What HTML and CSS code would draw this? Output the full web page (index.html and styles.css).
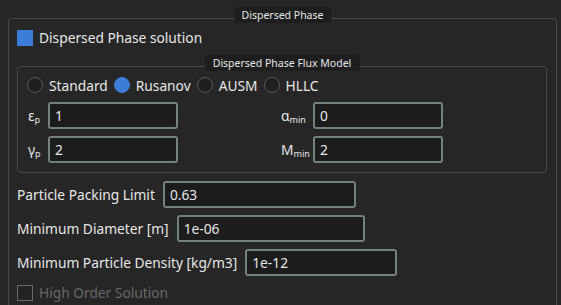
FILE: index.html
```html
<!DOCTYPE html>
<html lang="en">
<head>
  <meta charset="UTF-8" />
  <title>Dispersed Phase</title>
  <link rel="stylesheet" href="styles.css">
</head>
<body>

<section class="group outer">
  <div class="group-title">Dispersed Phase</div>

  <label class="check">
    <span class="box checked"></span>
    Dispersed Phase solution
  </label>

  <section class="group inner">
    <div class="group-title">Dispersed Phase Flux Model</div>

    <div class="radios">
      <label class="radio"><span class="dot"></span>Standard</label>
      <label class="radio"><span class="dot on"></span>Rusanov</label>
      <label class="radio"><span class="dot"></span>AUSM</label>
      <label class="radio"><span class="dot"></span>HLLC</label>
    </div>

    <div class="params">
      <div class="param">
        <span class="sym sym-short">ε<sub>p</sub></span>
        <div class="input">1</div>
      </div>
      <div class="param">
        <span class="sym sym-long">α<sub>min</sub></span>
        <div class="input">0</div>
      </div>
      <div class="param">
        <span class="sym sym-short">γ<sub>p</sub></span>
        <div class="input">2</div>
      </div>
      <div class="param">
        <span class="sym sym-long">M<sub>min</sub></span>
        <div class="input">2</div>
      </div>
    </div>
  </section>

  <div class="row">
    <span>Particle Packing Limit</span>
    <div class="input packing">0.63</div>
  </div>
  <div class="row">
    <span>Minimum Diameter [m]</span>
    <div class="input diameter">1e-06</div>
  </div>
  <div class="row">
    <span>Minimum Particle Density [kg/m3]</span>
    <div class="input density">1e-12</div>
  </div>

  <label class="check disabled">
    <span class="box"></span>
    High Order Solution
  </label>
</section>

</body>
</html>
```

FILE: styles.css
```css
:root {
  --bg: #262626;
  --title-bg: #1e1e1e;
  --line: #484848;
  --text: #e6e6e6;
  --muted: #686868;
  --accent: #3b7dd8;
  --field-bg: #1c1c1c;
  --field-border: #74817f;
}

* {
  margin: 0;
  padding: 0;
  box-sizing: border-box;
}

html, body {
  height: 100%;
  overflow: hidden;
}

body {
  background: var(--bg);
  color: var(--text);
  font-family: 'Noto Sans', sans-serif;
  font-size: 13.75px;
  padding: 18px 4px 0 8px;
}

.group {
  position: relative;
  border: 1px solid var(--line);
  border-radius: 4px;
}

.group-title {
  position: absolute;
  left: 50%;
  top: -12px;
  transform: translateX(-50%);
  background: var(--title-bg);
  font-size: 10.5px;
  line-height: 16px;
  padding: 0 8px;
  white-space: nowrap;
}

.outer {
  height: 287px;
  border-bottom: 0;
  border-radius: 4px 4px 0 0;
  padding: 11px 9px 0 8px;
}

.check {
  display: flex;
  align-items: center;
  gap: 6px;
  height: 16px;
  line-height: 16px;
}

.box {
  width: 16px;
  height: 16px;
  border: 1px solid #6a6a6a;
  background: #232323;
}

.box.checked {
  background: var(--accent);
  border-color: var(--accent);
}

.check.disabled {
  color: var(--muted);
  margin-top: 9px;
}

.inner {
  margin-top: 20px;
  padding: 10px 9px 9px 9px;
}

.radios {
  display: flex;
  align-items: center;
  height: 16px;
  gap: 6px;
}

.radio {
  display: flex;
  align-items: center;
  gap: 6px;
}

.dot {
  width: 16px;
  height: 16px;
  border-radius: 50%;
  border: 1px solid #5a5a5a;
  background: #1f1f1f;
}

.dot.on {
  background: var(--accent);
  border-color: var(--accent);
}

.params {
  display: grid;
  grid-template-columns: 1fr 1fr;
  row-gap: 7px;
  margin-top: 9px;
  padding: 0 3px 0 1px;
}

.param {
  display: flex;
  align-items: center;
}

.sym {
  display: inline-block;
}

.sym-short {
  width: 20px;
}

.sym-long {
  width: 32px;
}

sub {
  font-size: 9px;
  vertical-align: -2px;
}

.input {
  width: 130px;
  height: 27px;
  line-height: 23px;
  padding: 0 5px;
  border: 2px solid var(--field-border);
  border-radius: 3px;
  background: var(--field-bg);
}

.row {
  display: flex;
  align-items: center;
  gap: 8px;
  margin-top: 7px;
}

.inner + .row {
  margin-top: 8px;
}

.input.packing {
  width: 193px;
}

.input.diameter {
  width: 188px;
}

.input.density {
  width: 152px;
}
```
